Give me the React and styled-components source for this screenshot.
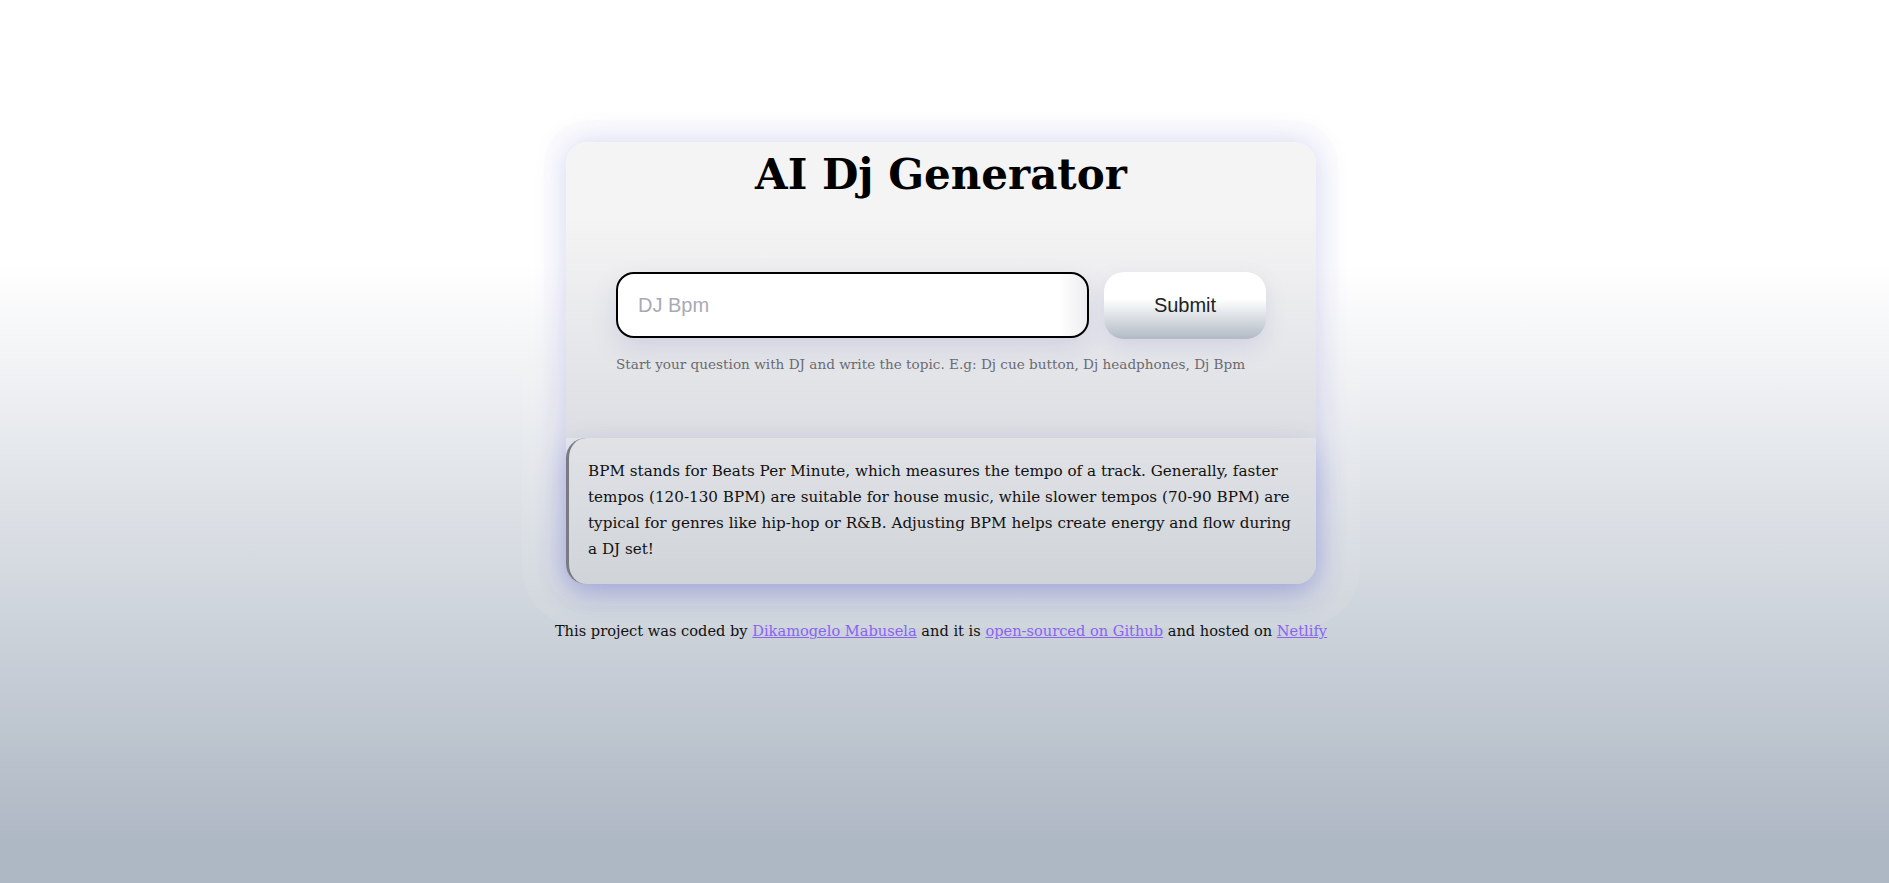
import styled, { createGlobalStyle } from 'styled-components';

const GlobalStyle = createGlobalStyle`
    html, body {
        margin: 0;
        padding: 0;
    }
    body {
        min-height: 100vh;
        background: linear-gradient(180deg, #ffffff 30%, #aeb8c4 95.5%) no-repeat;
        background-attachment: fixed;
        font-family: "DejaVu Serif", Georgia, serif;
        color: #111;
    }
`

function App() {
    return (
        <>
            <GlobalStyle />
            <Page>
                <Card>
                    <Header>
                        <Title>AI Dj Generator</Title>
                        <Form onSubmit={(e) => e.preventDefault()}>
                            <SearchInput type='search' defaultValue='DJ Bpm' />
                            <SubmitButton type='submit'>Submit</SubmitButton>
                        </Form>
                        <Hint>Start your question with DJ and write the topic. E.g: Dj cue button, Dj headphones, Dj Bpm</Hint>
                    </Header>
                    <Answer>
                        BPM stands for Beats Per Minute, which measures the tempo of a track. Generally, faster tempos (120-130 BPM) are suitable for house music, while slower tempos (70-90 BPM) are typical for genres like hip-hop or R&amp;B. Adjusting BPM helps create energy and flow during a DJ set!
                    </Answer>
                </Card>
                <Footer>
                    This project was coded by <a href='#'>Dikamogelo Mabusela</a> and it is <a href='#'>open-sourced on Github</a> and hosted on <a href='#'>Netlify</a>
                </Footer>
            </Page>
        </>
    );
}

export default App;

const Page = styled.main`
    display: flex;
    flex-direction: column;
    align-items: center;
    padding: 142px 7px 0 0;
`

const Card = styled.section`
    width: 750px;
    display: flex;
    flex-direction: column;
    border-radius: 22px;
    box-shadow:
        0 0 0 44px rgba(255, 255, 255, 0.07),
        0 0 0 22px rgba(235, 235, 250, 0.1),
        0 0 30px rgba(95, 95, 215, 0.3);
`

const Header = styled.div`
    display: flex;
    flex-direction: column;
    align-items: center;
    background: linear-gradient(180deg, #f4f4f4 25%, #dcdee3 100%);
    padding: 8px 50px 64px 50px;
    border-radius: 22px 22px 0 0;
`

const Title = styled.h1`
    margin: 0 0 72px 0;
    font-size: 42px;
    line-height: 1.2;
    font-weight: 700;
    color: #000;
`

const Form = styled.form`
    display: flex;
    width: 100%;
    gap: 15px;
`

const SearchInput = styled.input`
    flex: 1;
    height: 66px;
    box-sizing: border-box;
    padding: 0 20px;
    border: 2px solid #000;
    border-radius: 18px;
    background: linear-gradient(90deg, #fff 94%, #eeeef2 100%);
    box-shadow: 0 10px 24px rgba(110, 110, 190, 0.18);
    font-family: "Liberation Sans", Arial, sans-serif;
    font-size: 20px;
    color: #a9a9b4;
    outline: none;
    -webkit-appearance: none;
`

const SubmitButton = styled.button`
    width: 162px;
    height: 67px;
    border: none;
    border-radius: 20px;
    background: linear-gradient(180deg, #ffffff 40%, #b1bac5 100%);
    box-shadow: 0 8px 20px rgba(120, 120, 200, 0.18);
    font-family: "Liberation Sans", Arial, sans-serif;
    font-size: 20px;
    color: #222;
    cursor: pointer;
`

const Hint = styled.p`
    align-self: flex-start;
    margin: 15px 0 0 0;
    font-size: 13.6px;
    line-height: 20px;
    color: #6a6a70;
`

const Answer = styled.div`
    box-sizing: border-box;
    padding: 20px 22px 22px 19px;
    border-left: 3px solid #7a7a85;
    border-radius: 20px;
    background: linear-gradient(180deg, #e0e2e6 0%, #d0d4d9 100%);
    box-shadow: 0 10px 28px rgba(90, 95, 200, 0.3);
    font-size: 15.2px;
    line-height: 26px;
    color: #111;
`

const Footer = styled.p`
    margin: 37px 0 0 0;
    font-size: 14.6px;
    line-height: 20px;
    color: #111;
    a {
        color: #8a63f2;
        text-decoration: underline;
    }
`
